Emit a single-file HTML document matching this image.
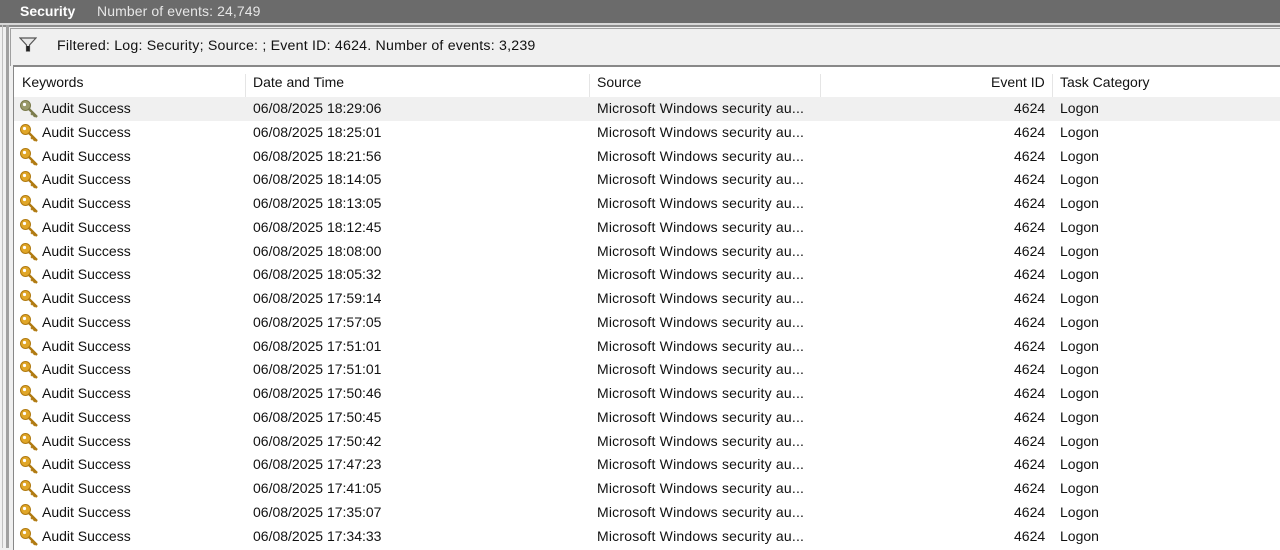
<!DOCTYPE html>
<html><head><style>
body{margin:0;width:1280px;height:548px;overflow:hidden;background:#f0f0f0;font-family:"Liberation Sans",sans-serif;font-size:14px;color:#111;position:relative}
.top{position:absolute;left:0;top:0;width:1280px;height:23px;background:#6b6b6b;color:#fff;font-size:14px;line-height:23px}
.top b{position:absolute;left:20px}
.top span{position:absolute;left:97px;color:#e6e6e6;letter-spacing:0.1px}
.l1{position:absolute;left:0;top:23px;width:1280px;height:2px;background:#d8d8d8}
.l2{position:absolute;left:0;top:25px;width:1280px;height:2px;background:#8c8c8c}
.vl{position:absolute;left:6px;top:25px;width:3px;height:523px;background:#a0a0a0}
.vl2{position:absolute;left:2px;top:25px;width:1px;height:523px;background:#c0c0c0}
.filter{position:absolute;left:10px;top:28px;width:1270px;height:37px;background:#f0f0f0;border-top:1px solid #a0a0a0;border-left:1px solid #a0a0a0}
.filter .t{position:absolute;left:46px;top:9px;font-size:14.2px;letter-spacing:0.2px}
.tbl{position:absolute;left:13px;top:65px;width:1267px;height:483px;background:#fff;border-top:2px solid #888;border-left:1px solid #888}
.hdr{position:absolute;left:0;top:0;width:1267px;height:30px}
.hdr div{position:absolute;top:7px}
.sep{position:absolute;top:0;width:1px;height:30px;background:#e5e5e5}
.row{position:absolute;left:0;width:1267px;height:24px}
.row div{position:absolute;top:3px;white-space:nowrap}
.key{position:absolute;left:5px;top:2px}
</style></head><body>
<div class="top"><b>Security</b><span>Number of events: 24,749</span></div>
<div class="l1"></div><div class="l2"></div><div class="vl2"></div><div class="vl"></div>
<div class="filter">
<svg style="position:absolute;left:8px;top:8px" width="18" height="16" viewBox="0 0 18 16"><path d="M1 1H17L10.5 8V14H7.5V8Z" fill="#e8e8e8" stroke="#555" stroke-width="1.2"/><rect x="7.5" y="9" width="3" height="5" fill="#222"/></svg>
<div class="t">Filtered: Log: Security; Source: ; Event ID: 4624. Number of events: 3,239</div>
</div>
<div class="tbl">
<div class="hdr">
<div style="left:8px">Keywords</div><div class="sep" style="left:231px"></div>
<div style="left:239px">Date and Time</div><div class="sep" style="left:575px"></div>
<div style="left:583px">Source</div><div class="sep" style="left:806px"></div>
<div style="left:977px">Event ID</div><div class="sep" style="left:1038px"></div>
<div style="left:1046px">Task Category</div>
</div>
<div id="rows"></div>
</div>
<script>
var t=["18:29:06","18:25:01","18:21:56","18:14:05","18:13:05","18:12:45","18:08:00","18:05:32","17:59:14","17:57:05","17:51:01","17:51:01","17:50:46","17:50:45","17:50:42","17:47:23","17:41:05","17:35:07","17:34:33"];
var h="";
t.forEach(function(x,i){
var y=30+i*23.75;var bg=i==0?"background:#f0f0f0;":"";var c=i==0?"#9a9a6a":"#e0a628";var c2=i==0?"#7a7a4a":"#b07a10";
h+='<div class="row" style="top:'+y+'px;'+bg+'"><svg class="key" width="20" height="20" viewBox="0 0 20 20"><circle cx="6.5" cy="6.5" r="5" fill="'+c+'" stroke="'+c2+'"/><circle cx="5.5" cy="5.5" r="1.6" fill="#fff"/><path d="M9.5 9.5L18 18M14 14l-1.8 1.8M16 16l-1.5 1.5" stroke="'+c2+'" stroke-width="2.4" fill="none"/></svg><div style="left:28px">Audit Success</div><div style="left:239px">06/08/2025 '+x+'</div><div style="left:583px;letter-spacing:0.2px">Microsoft Windows security au...</div><div style="left:1000px">4624</div><div style="left:1046px">Logon</div></div>';
});
document.getElementById("rows").innerHTML=h;
</script>
</body></html>
